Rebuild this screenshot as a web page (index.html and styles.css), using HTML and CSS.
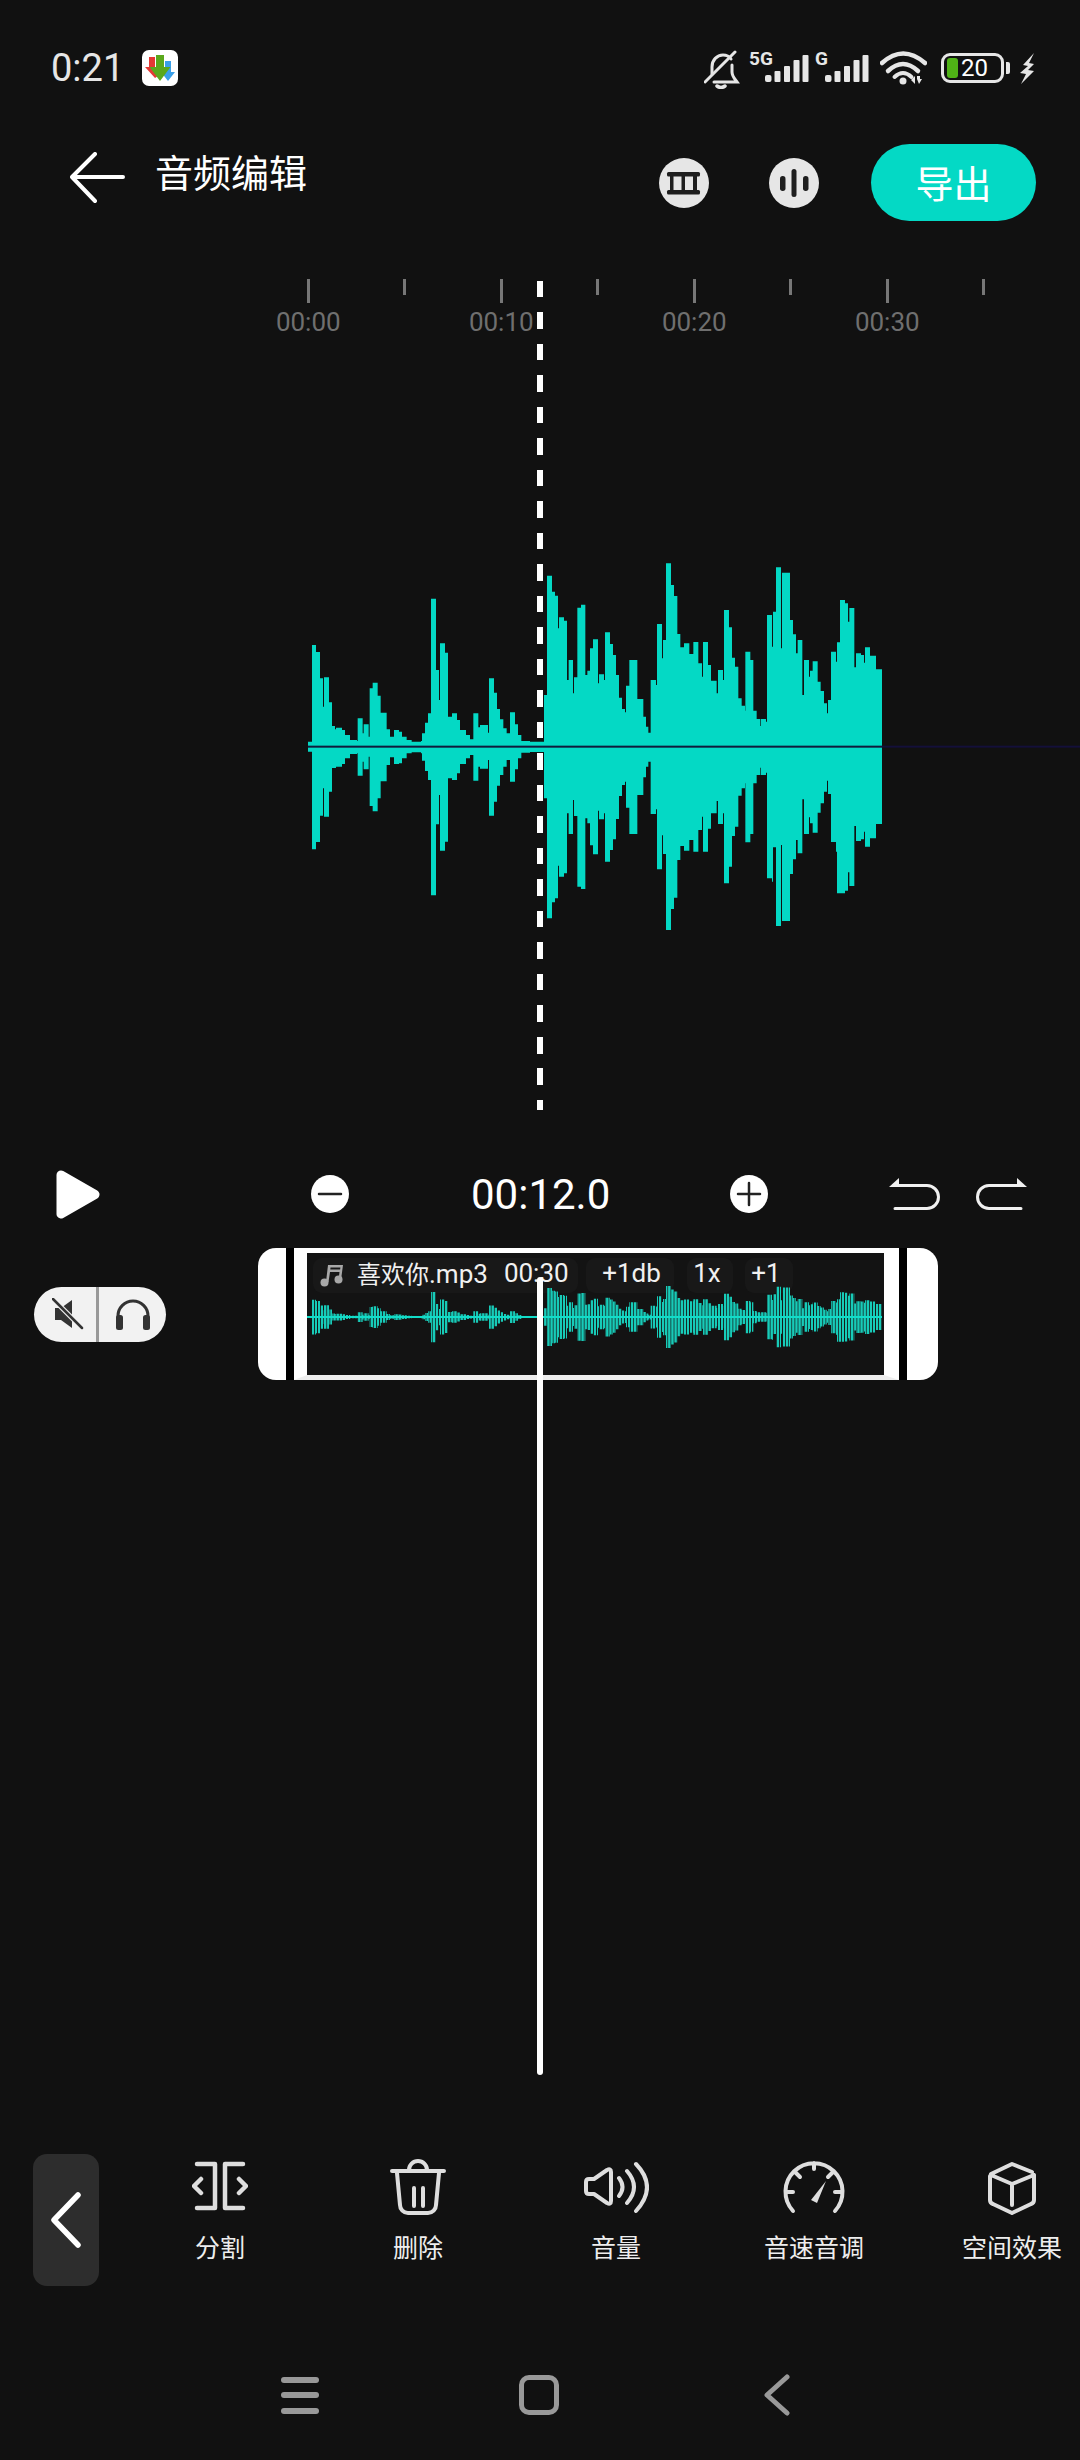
FILE: index.html
```html
<!doctype html>
<html>
<head>
<title>音频编辑</title>
<meta name="viewport" content="width=device-width">
<link rel="stylesheet" href="styles.css">
</head>
<body>
<div class="page">

<div class="status">
  <span class="clock">0:21</span>
  <svg class="appicon" width="36" height="36" viewBox="0 0 36 36">
    <rect width="36" height="36" rx="7" fill="#fff"/>
    <path d="M7 7h6v10h3v9l-3 2-10-11h4z" fill="#e53935"/>
    <path d="M23 11h6v11h4l-7 9-7-9h4z" fill="#3a9fe8"/>
    <path d="M14 5h8v12h6.500l-10.500 14-10.500-14h6.500z" fill="#5aa81c"/>
  </svg>
  <div class="sysicons">
    <svg class="bell" width="36" height="39" viewBox="0 0 36 39" fill="none" stroke="#e6e6e6" stroke-width="3" stroke-linecap="round">
      <path d="M31 2 1 32"/>
      <path d="M8 24v-7c0-7 5-12 11-12 3 0 6 1 8 4"/>
      <path d="M28 15v7c0 4 2 6 5 10H10"/>
      <path d="M13 36q4 3 8 0" stroke-width="3.500"/>
    </svg>
    <svg class="signal" width="123" height="44" viewBox="0 0 123 44" fill="#e6e6e6">
      <text x="2" y="19" class="nettext">5G</text>
      <rect x="18" y="29" width="6.500" height="7" rx="2"/><rect x="27.500" y="25" width="6" height="11" rx="1"/><rect x="37" y="20" width="6" height="16" rx="1"/><rect x="46.500" y="14" width="6" height="22" rx="1"/><rect x="55.500" y="9" width="6" height="27" rx="1"/>
      <text x="68" y="19" class="nettext">G</text>
      <rect x="78" y="29" width="6.500" height="7" rx="2"/><rect x="87.500" y="25" width="6" height="11" rx="1"/><rect x="97" y="20" width="6" height="16" rx="1"/><rect x="106.500" y="14" width="6" height="22" rx="1"/><rect x="115.500" y="9" width="6" height="27" rx="1"/>
    </svg>
    <svg class="wifi" width="47" height="34" viewBox="0 0 47 34" fill="none" stroke="#e6e6e6" stroke-width="4.500" stroke-linecap="round">
      <path d="M2 12Q23-7 45 12"/>
      <path d="M8 20Q23 6 38 20"/>
      <path d="M14.500 26Q23 18 31.500 26" stroke-width="4"/>
      <circle cx="23" cy="30" r="3.500" fill="#e6e6e6" stroke="none"/>
      <path d="M31 29l4-4v8zM37 25h3v3h2l-3 5-2-5z" fill="#e6e6e6" stroke="none"/>
    </svg>
    <div class="battery"><i class="batt-level"></i><span>20</span></div>
    <i class="batt-nub"></i>
    <svg class="bolt" width="18" height="31" viewBox="0 0 18 31"><path d="M16 0 5 12l5 1-8 7 6 1-5 10 13-13-6-1 6-6-5-1z" fill="#e6e6e6"/></svg>
  </div>
</div>

<div class="topbar">
  <svg class="back" width="56" height="52" viewBox="0 0 56 52" fill="none" stroke="#fff" stroke-width="4" stroke-linecap="round" stroke-linejoin="round"><path d="M53 25H3M25 2 2 25l23 24"/></svg>
  <h1 class="title">音频编辑</h1>
  <svg class="roundbtn first" width="50" height="50" viewBox="0 0 50 50" fill="#1e1e1e">
    <circle cx="25" cy="25" r="25" fill="#e6e6e6"/>
    <rect x="8" y="14" width="33" height="4.500" rx="1.500"/><rect x="8" y="32" width="33" height="4.500" rx="1.500"/>
    <rect x="11" y="16" width="3.500" height="18"/><rect x="22.500" y="16" width="3.500" height="18"/><rect x="34" y="16" width="4" height="18"/>
  </svg>
  <svg class="roundbtn" width="50" height="50" viewBox="0 0 50 50" fill="#1e1e1e">
    <circle cx="25" cy="25" r="25" fill="#e6e6e6"/>
    <rect x="22.500" y="11" width="5" height="28" rx="2.500"/><rect x="11" y="18" width="5.500" height="15" rx="2.700"/><rect x="34" y="18" width="5.500" height="15" rx="2.700"/>
  </svg>
  <a class="export">导出</a>
</div>

<div class="ruler">
  <div class="rcell"><i class="major"></i><span>00:00</span></div>
  <div class="rcell"><i class="minor"></i></div>
  <div class="rcell"><i class="major"></i><span>00:10</span></div>
  <div class="rcell"><i class="minor"></i></div>
  <div class="rcell"><i class="major"></i><span>00:20</span></div>
  <div class="rcell"><i class="minor"></i></div>
  <div class="rcell"><i class="major"></i><span>00:30</span></div>
  <div class="rcell"><i class="minor"></i></div>
</div>

<svg class="bigwave" width="790" height="400" viewBox="0 0 2370 1200">
  <defs>
    <path id="wave" d="M54 620V605H66V315H78V336H90V415H99V500H102V412H117V487H126V558H135V568H138V563H156V570H165V585H180V600H201V603H203V535H218V580H221V553H236V590H239V445H248V428H263V467H272V518H290V568H300V590H312V570H327V575H336V590H350V600H365V605H393V603H396V580H405V548H414V520H423V176H438V390H447V480H450V310H465V338H474V530H486V520H501V540H510V570H528V585H540V598H550V520H565V562H570V555H594V578H597V415H612V458H621V507H630V538H640V565H650V580H660V517H675V553H684V585H694V603H720V605H762V465H771V107H786V155H795V167H804V265H807V232H822V242H831V420H836V360H849V460H852V412H862V203H873V194H886V405H892V392H900V325H909V298H924V430H927V403H942V420H945V277H960V312H969V345H978V405H987V473H996V507H1005V517H1008V437H1018V360H1042V477H1060V530H1068V560H1075V578H1082V420H1098V435H1101V252H1116V355H1119V300H1128V70H1143V135H1152V168H1162V282H1171V322H1182V310H1198V342H1210V306H1225V370H1236V410H1239V306H1254V375H1263V422H1280V460H1284V390H1299V420H1302V210H1317V262H1326V353H1335V380H1345V475H1355V497H1365V512H1366V335H1381V360H1390V512H1400V537H1410V558H1412V537H1428V545H1431V225H1446V320H1449V215H1458V82H1473V325H1476V98H1500V240H1509V283H1518V340H1523V300H1537V465H1542V360H1557V410H1560V392H1568V364H1583V425H1592V453H1602V490H1611V520H1614V480H1623V335H1638V365H1641V307H1650V180H1665V190H1674V245H1678V204H1693V382H1698V340H1713V345H1722V368H1725V322H1740V347H1758V388H1776V620ZM54 620V635H66V928H78V906H90V827H99V745H102V830H117V755H126V684H138V680H156V672H165V655H180V642H201V640H203V707H218V665H221V688H236V650H239V798H248V814H263V775H272V724H290V675H300V652H312V672H327V670H336V655H350V640H365V637H393V640H396V662H405V693H414V720H423V1066H438V853H447V765H450V932H465V905H474V715H486V720H501V700H510V672H528V655H540V645H550V722H565V680H570V686H594V660H597V827H612V785H621V737H630V705H640V680H650V660H660V725H675V688H684V655H694V638H720V636H762V775H771V1135H786V1087H795V1075H804V977H807V1010H822V1000H831V820H836V882H849V780H852V828H862V1040H873V1047H886V835H892V850H900V916H909V943H924V812H927V838H942V820H945V965H960V930H969V898H978V837H987V768H996V735H1005V725H1008V803H1018V882H1042V765H1060V712H1068V680H1075V665H1082V822H1098V808H1101V988H1116V886H1119V942H1128V1170H1143V1107H1152V1073H1162V960H1171V918H1182V932H1198V900H1210V935H1225V870H1236V830H1239V935H1254V866H1263V820H1280V783H1284V852H1299V820H1302V1030H1317V980H1326V888H1335V860H1345V767H1355V745H1365V730H1366V907H1381V882H1390V730H1400V705H1410V683H1412V705H1428V698H1431V1015H1446V1025H1449V922H1458V1158H1473V915H1476V1143H1500V1002H1509V958H1518V900H1523V940H1537V778H1542V882H1557V832H1560V850H1568V878H1583V818H1592V790H1602V755H1611V722H1614V762H1623V906H1638V935H1641V1060H1665V1052H1674V997H1678V1038H1693V858H1698V903H1713V898H1722V875H1725V920H1740V895H1758V852H1776V620Z"/>
  </defs>
  <use href="#wave" fill="#04d9c5"/>
  <rect x="54" y="617" width="1722" height="6" fill="#101c3c"/>
  <rect x="1776" y="617" width="594" height="6" fill="#14103a"/>
</svg>

<div class="controls">
  <svg class="play" width="44" height="49" viewBox="0 0 44 49"><path d="M5 5 39 24.500 5 44z" fill="#fff" stroke="#fff" stroke-width="9" stroke-linejoin="round"/></svg>
  <svg class="zoomout" width="38" height="38" viewBox="0 0 38 38"><circle cx="19" cy="19" r="19" fill="#fff"/><path d="M8 19h22" stroke="#222" stroke-width="2.500" stroke-linecap="round"/></svg>
  <span class="timecode">00:12.0</span>
  <svg class="zoomin" width="38" height="38" viewBox="0 0 38 38"><circle cx="19" cy="19" r="19" fill="#fff"/><path d="M8 19h22M19 8v22" stroke="#222" stroke-width="2.500" stroke-linecap="round"/></svg>
  <svg class="undo" width="51" height="33" viewBox="0 0 51 33"><path d="M0 9 10 0v9z" fill="#f0f0f0"/><path d="M5 7.500h33a11.500 11.500 0 0 1 0 23H6" fill="none" stroke="#f0f0f0" stroke-width="3" stroke-linecap="round"/></svg>
  <svg class="redo" width="51" height="33" viewBox="0 0 51 33"><path d="M51 9 41 0v9z" fill="#f0f0f0"/><path d="M46 7.500H13a11.500 11.500 0 0 0 0 23h32" fill="none" stroke="#f0f0f0" stroke-width="3" stroke-linecap="round"/></svg>
</div>

<div class="timeline">
  <div class="mutepill">
    <div class="half left">
      <svg width="32" height="32" viewBox="0 0 32 32"><path d="M3 10h6l11-8v28l-11-8H3z" fill="#333"/><path d="M1 1l29 29" stroke="#f2f2f2" stroke-width="5"/><path d="M1 1l29 29" stroke="#333" stroke-width="2.500" stroke-linecap="round"/></svg>
    </div>
    <div class="half">
      <svg width="34" height="31" viewBox="0 0 34 31"><path d="M2 20v-3a15 15 0 0 1 30 0v3" fill="none" stroke="#333" stroke-width="3"/><rect y="16" width="7" height="15" rx="2.500" fill="#333"/><rect x="27" y="16" width="7" height="15" rx="2.500" fill="#333"/></svg>
    </div>
  </div>
  <div class="clip">
    <div class="handle lh"></div>
    <div class="strip"></div>
    <div class="frame">
      <div class="chips">
        <div class="chip name">
          <svg width="24" height="23" viewBox="0 0 24 23" fill="#a8a8a8"><circle cx="4.500" cy="18.500" r="4"/><circle cx="18.500" cy="15.500" r="4"/><path d="M6 18 8 1h15l-2 15h-2.500l1-8H10l-1.500 10zM10.300 5.500h9.800l.3-2H10.500z"/></svg>
          <span class="fname"><span class="zh">喜欢你</span>.mp3</span><span class="dur">00:30</span>
        </div>
        <div class="chip db">+1db</div>
        <div class="chip sp">1x</div>
        <div class="chip pt">+1</div>
      </div>
      <svg class="miniwave" width="575" height="70" viewBox="51 0 1725 1240" preserveAspectRatio="none">
        <defs><pattern id="stripes" width="9.300" height="20" patternUnits="userSpaceOnUse"><rect width="7" height="20" fill="#17cbb8"/></pattern></defs>
        <use href="#wave" fill="url(#stripes)"/>
        <rect x="51" y="602" width="1725" height="36" fill="#12dcc8"/>
      </svg>
    </div>
    <div class="strip"></div>
    <div class="handle rh"></div>
  </div>
</div>

<div class="tools">
  <div class="collapse">
    <svg width="32" height="56" viewBox="0 0 32 56" fill="none" stroke="#fff" stroke-width="5.500" stroke-linecap="round" stroke-linejoin="round"><path d="M28 3 4 28l24 25"/></svg>
  </div>
  <div class="tool">
    <svg width="56" height="56" viewBox="0 0 56 56" fill="none" stroke="#dedede" stroke-width="4.500" stroke-linecap="round" stroke-linejoin="round"><path d="M5 5h18v44H5M51 5H33v44h18M9 20l-7 7 7 7M47 20l7 7-7 7"/></svg>
    <span>分割</span>
  </div>
  <div class="tool">
    <svg width="56" height="56" viewBox="0 0 56 56" fill="none" stroke="#dedede" stroke-width="4" stroke-linecap="round" stroke-linejoin="round"><path d="M2 12h52M19 11a9 9 0 0 1 18 0M7 14l3 32a8 8 0 0 0 8 8h20a8 8 0 0 0 8-8l3-32M24 29v18M33 29v18"/></svg>
    <span>删除</span>
  </div>
  <div class="tool">
    <svg width="66" height="56" viewBox="0 0 66 56" fill="none" stroke="#dedede" stroke-width="4" stroke-linecap="round" stroke-linejoin="round"><path d="M3 23v9q0 3 3 3h5l13 9q4 2 4-2V13q0-4-4-2l-13 9H6q-3 0-3 3zM36 19q7 9 0 18M44 12q14 16 0 32M53 5q22 23 0 47"/></svg>
    <span>音量</span>
  </div>
  <div class="tool">
    <svg width="62" height="56" viewBox="0 0 62 56" fill="none" stroke="#dedede" stroke-width="4" stroke-linecap="round"><path d="M10 52a28.500 28.500 0 1 1 42 0M31 4v6M12 13l5 5M50 13l-5 5M3 33h7M59 33h-7"/><path d="M43 22 34 44l-6-3z" fill="#dedede" stroke="none"/></svg>
    <span>音速音调</span>
  </div>
  <div class="tool">
    <svg width="50" height="56" viewBox="0 0 50 56" fill="none" stroke="#dedede" stroke-width="4" stroke-linecap="round" stroke-linejoin="round"><path d="M4 15 25 5l20 8M4 16l21 9 22-9M25 25v21M3 17v24q0 3 3 4l19 9 19-9q3-1 3-4V16"/></svg>
    <span>空间效果</span>
  </div>
</div>

<div class="nav">
  <div class="burger"><i></i><i></i><i></i></div>
  <i class="homekey"></i>
  <svg width="26" height="42" viewBox="0 0 26 42" fill="none" stroke="#999" stroke-width="5" stroke-linecap="round" stroke-linejoin="round"><path d="M23 3 3 21l20 18"/></svg>
</div>

<!-- the two playhead lines sit over the wave and the clip -->
<div class="playhead dashed"></div>
<div class="playhead solid"></div>

</div>
</body>
</html>
```

FILE: styles.css
```css
html, body {margin:0; padding:0; background:#111}
body {font-family:Roboto,"Noto Sans CJK SC",sans-serif; color:#fff}
svg {display:block; flex:none}
.page {position:relative; width:1080px; height:2460px; overflow:hidden; background:#111}

.status {display:flex; align-items:center; height:64px; padding:36px 44px 0 51px}
.clock {font-size:38px; color:#e6e6e6; width:91px}
.sysicons {display:flex; align-items:center; margin-left:auto}
.bell {margin-top:2px}
.signal {margin-left:7px}
.nettext {font:bold 19px Roboto,sans-serif}
.wifi {margin-left:10px}
.battery {position:relative; box-sizing:border-box; width:63px; height:30px; margin-left:14px; border:3px solid #e6e6e6; border-radius:9px; display:flex; align-items:center; padding-left:17px; font-size:24px; line-height:1; color:#fff}
.batt-level {position:absolute; left:3px; top:2px; bottom:2px; width:11px; background:#4fb316; border-radius:3px}
.batt-nub {width:4px; height:12px; margin-left:2px; background:#e6e6e6; border-radius:0 2px 2px 0}
.bolt {margin-left:8px}

.topbar {display:flex; align-items:center; height:77px; margin-top:44px; padding:0 44px 0 70px}
.back {margin-top:-10px}
.title {margin:-24px 0 0 29px; font-size:38px; font-weight:normal; color:#fff; white-space:nowrap}
.roundbtn {margin-left:60px}
.roundbtn.first {margin-left:auto}
.export {width:165px; height:77px; margin-left:52px; background:#04d9c5; border-radius:39px; text-align:center; font-size:38px; line-height:82px; color:#fff}

.ruler {display:flex; height:80px; margin-top:58px; padding-left:260px}
.rcell {flex:none; width:96.5px; display:flex; flex-direction:column; align-items:center; color:#6f6f6f; font-size:26px}
.major {width:3px; height:24px; background:#777}
.minor {width:3px; height:16px; background:#777}
.rcell span {margin-top:4px; line-height:30px}

.bigwave {margin:181px 0 0 290px; height:400px}

.controls {display:flex; align-items:center; height:60px; margin-top:224px; padding-left:56px}
.zoomout {margin-left:211px}
.timecode {width:136px; margin-left:122px; text-align:center; font-size:42px; white-space:nowrap}
.zoomin {margin-left:123px}
.undo {margin-left:121px}
.redo {margin-left:36px}

.timeline {display:flex; align-items:center; height:132px; margin-top:24px; padding-left:34px}
.mutepill {display:flex; width:132px; height:55px; background:#f2f2f2; border-radius:28px}
.half {flex:1; display:flex; align-items:center; justify-content:center}
.half.left {flex:none; width:65px; border-right:3px solid #999; padding-left:6px; box-sizing:border-box}
.clip {display:flex; height:132px; margin-left:92px}
.handle {background:#fff}
.lh {width:28px; border-radius:18px 0 0 18px}
.rh {width:31px; border-radius:0 18px 18px 0}
.strip {width:8px; background:#000}
.frame {position:relative; box-sizing:border-box; width:605px; height:132px; background:#131313; border:solid #fff; border-width:5px 15px 5px 13px; border-bottom-color:#eee}
.chips {display:flex; gap:12px; margin:5px 0 0 6px}
.chip {box-sizing:border-box; display:flex; align-items:center; justify-content:center; height:35px; padding-bottom:6px; background:#181818; border-radius:9px; font-size:26px; color:#f0f0f0; white-space:nowrap}
.name {width:265px; justify-content:flex-start; padding-left:7px; margin-right:-4px}
.name svg {margin-top:6px}
.zh {font-size:24px}
.fname {margin-left:13px}
.dur {margin-left:16px}
.db {width:88px; padding-left:3px}
.sp {width:46px; margin-left:1px; padding-right:6px}
.pt {width:48px; padding-right:6px}
.miniwave {position:absolute; left:0; top:29px}

.tools {display:flex; height:132px; margin-top:774px; padding-left:33px}
.collapse {flex:none; width:66px; height:132px; display:flex; align-items:center; justify-content:center; background:#2d2d2d; border-radius:14px}
.tool {flex:none; width:198px; display:flex; flex-direction:column; align-items:center; font-size:25px; color:#eee; white-space:nowrap}
.collapse + .tool {margin-left:22px}
.tool svg {margin-top:5px}
.tool span {margin-top:17px; line-height:34px}

.nav {display:flex; align-items:center; height:60px; margin-top:79px; padding-left:281px}
.burger {display:flex; flex-direction:column; gap:9.500px; width:38px}
.burger i {height:6px; background:#999; border-radius:3px}
.homekey {box-sizing:border-box; width:40px; height:40px; margin-left:200px; border:5px solid #999; border-radius:10px}
.nav svg {margin-left:205px}

.playhead {position:absolute; left:537px; width:6px}
.dashed {top:281px; height:829px; background:repeating-linear-gradient(#fff 0, #fff 16.500px, transparent 16.500px, transparent 31.500px)}
.solid {top:1277px; height:798px; background:#fff; border-radius:3px}
```
